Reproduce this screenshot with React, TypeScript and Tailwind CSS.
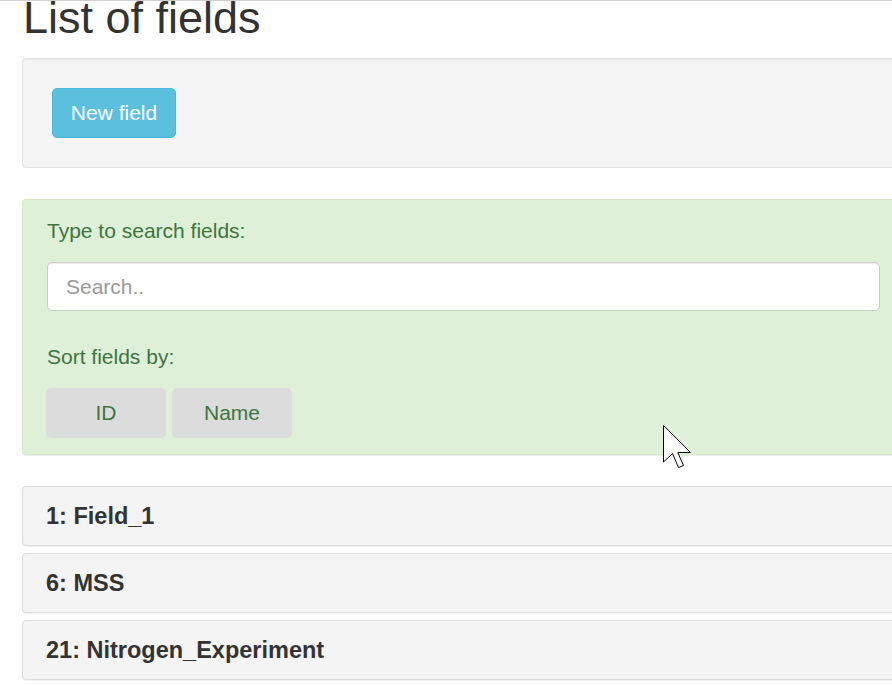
import React, { useState } from 'react';

type Field = { id: number; name: string };

const FIELDS: Field[] = [
  { id: 1, name: 'Field_1' },
  { id: 6, name: 'MSS' },
  { id: 21, name: 'Nitrogen_Experiment' },
];

const Cursor: React.FC = () => (
  <svg
    className="absolute left-[663px] top-[424px] pointer-events-none"
    width="29"
    height="44"
    viewBox="0 0 29 44"
  >
    <polygon
      points="0.5,0.5 0.5,37 9.5,28.5 15.5,42.5 20.5,40.5 14.8,27.5 27.5,27.5"
      fill="#fff"
      stroke="#000"
      strokeWidth="1"
      strokeLinejoin="miter"
    />
  </svg>
);

const App: React.FC = () => {
  const [query, setQuery] = useState('');
  const [sortBy, setSortBy] = useState<'id' | 'name'>('id');

  const shown = FIELDS.filter((f) => f.name.toLowerCase().includes(query.toLowerCase())).sort((a, b) =>
    sortBy === 'id' ? a.id - b.id : a.name.localeCompare(b.name)
  );

  return (
    <div className="relative w-full min-h-[686px] overflow-hidden bg-white border-t border-[#cfcfcf] font-['Liberation_Sans',Arial,sans-serif] text-[#333]">
      <div className="ml-[22px] w-[883px]">
        <h1 className="m-0 pl-[1px] text-[45px] leading-[34px] font-normal text-[#333]">List of fields</h1>

        <div className="mt-[23px] h-[110px] bg-[#f5f5f5] border border-[#e3e3e3] rounded-[4px] pl-[29px] pt-[29px] shadow-[inset_0_1px_1px_rgba(0,0,0,0.05)]">
          <button className="w-[124px] h-[50px] flex items-center justify-center bg-[#5bc0de] border border-[#46b8da] rounded-[5px] text-white text-[21px]">
            New field
          </button>
        </div>

        <div className="mt-[31px] bg-[#dff0d8] border border-[#d6e9c6] rounded-[4px] px-[24px] pt-[19px] pb-[16px] text-[#3c763d] shadow-[0_1px_1px_rgba(0,0,0,0.08)]">
          <div className="text-[21px] leading-[24px]">Type to search fields:</div>
          <input
            value={query}
            onChange={(e) => setQuery(e.target.value)}
            placeholder="Search.."
            className="mt-[19px] block w-full h-[49px] bg-white border border-[#ccc] rounded-[5px] px-[18px] text-[21px] text-[#555] placeholder:text-[#999] outline-none shadow-[inset_0_1px_1px_rgba(0,0,0,0.075)]"
          />
          <div className="mt-[34px] text-[21px] leading-[24px]">Sort fields by:</div>
          <div className="mt-[19px] -ml-[1px] flex gap-[6px]">
            <button
              onClick={() => setSortBy('id')}
              className="w-[120px] h-[50px] flex items-center justify-center bg-[#dcdcdc] rounded-[5px] text-[21px] text-[#3c763d]"
            >
              ID
            </button>
            <button
              onClick={() => setSortBy('name')}
              className="w-[120px] h-[50px] flex items-center justify-center bg-[#dcdcdc] rounded-[5px] text-[21px] text-[#3c763d]"
            >
              Name
            </button>
          </div>
        </div>

        <div className="mt-[31px] flex flex-col gap-[7px]">
          {shown.map((f) => (
            <div
              key={f.id}
              className="h-[60px] flex items-center bg-[#f4f4f4] border border-[#dcdcdc] rounded-[4px] pl-[23px] shadow-[0_1px_1px_rgba(0,0,0,0.06)]"
            >
              <span className="text-[23.5px] leading-[28px] font-bold text-[#333]">
                {f.id}: {f.name}
              </span>
            </div>
          ))}
        </div>
      </div>
      <Cursor />
    </div>
  );
};

export default App;
